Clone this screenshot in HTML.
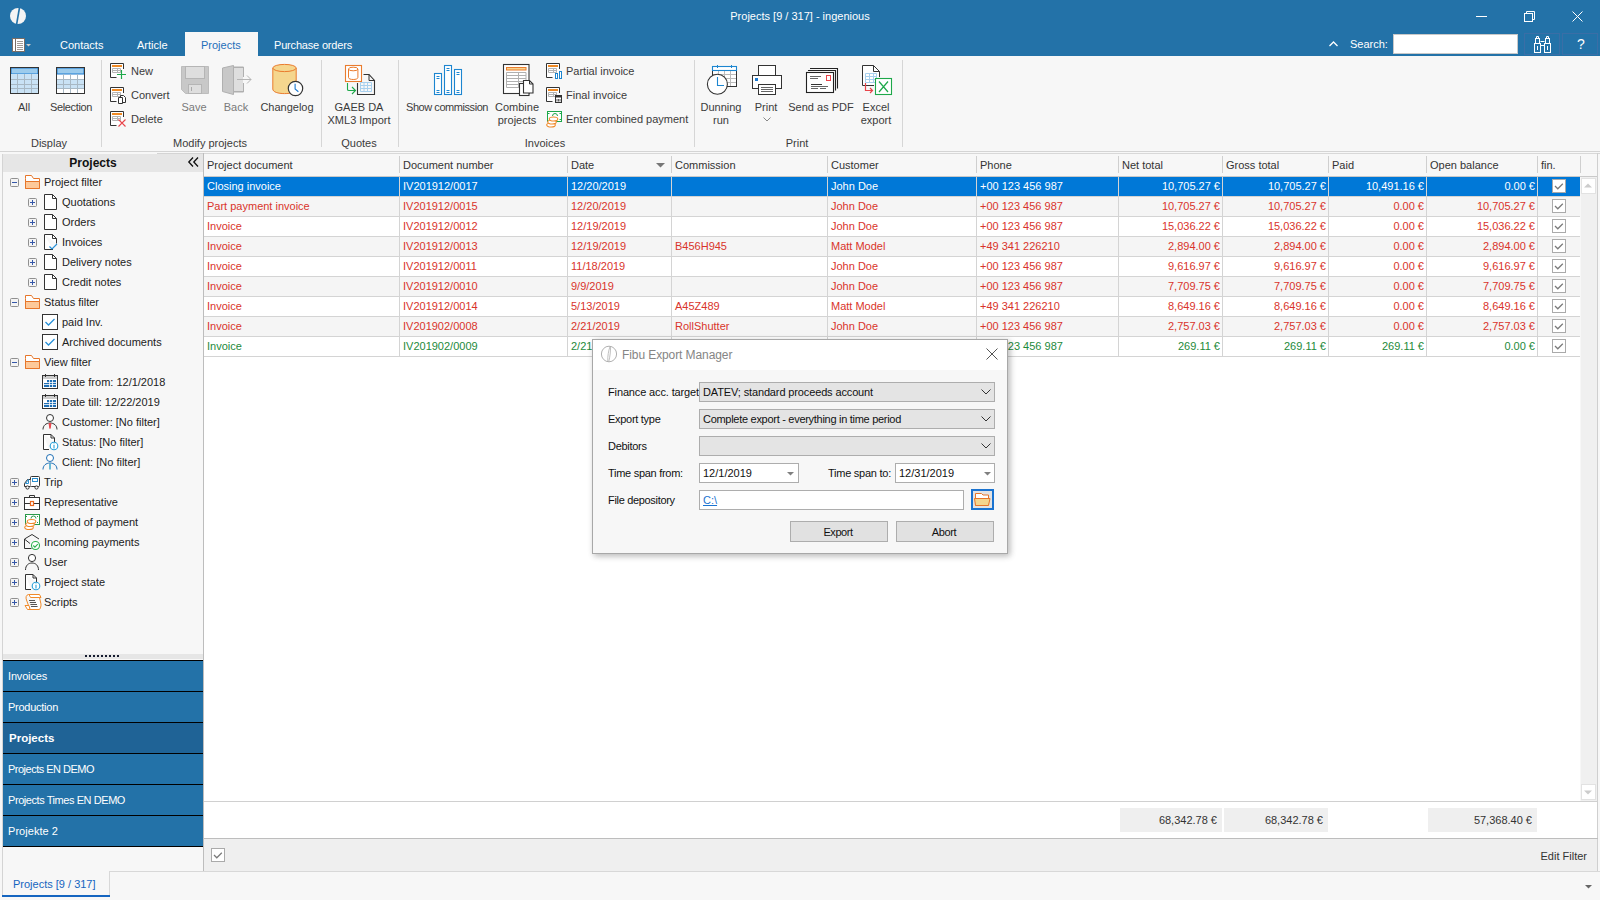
<!DOCTYPE html><html><head><meta charset="utf-8"><style>
*{margin:0;padding:0;box-sizing:border-box}
body{width:1600px;height:900px;overflow:hidden;position:relative;background:#f7f7f7;font-family:"Liberation Sans",sans-serif;font-size:11px;color:#333}
.ab{position:absolute}
.t{position:absolute;white-space:nowrap;line-height:14px}
svg{position:absolute;overflow:visible}
</style></head><body>
<div class="ab" style="left:0px;top:0px;width:1600px;height:56px;background:#2372a8"></div>
<svg style="left:10px;top:8px" width="16" height="16" viewBox="0 0 16 16"><circle cx="8" cy="8" r="8" fill="#f4f4f4"/><path d="M6.5 17 L9.6 -1" stroke="#2372a8" stroke-width="1.6"/></svg>
<div class="t" style="left:600.0px;top:9px;width:400px;text-align:center;color:#fff">Projects [9 / 317] - ingenious</div>
<svg style="left:1476px;top:16px" width="12" height="1" viewBox="0 0 12 1"><rect x="0" y="0" width="11" height="1" fill="#fff"/></svg>
<svg style="left:1524px;top:11px" width="11" height="11" viewBox="0 0 11 11"><rect x="0.5" y="2.5" width="8" height="8" fill="none" stroke="#fff"/><path d="M2.5 2.5V0.5h8v8h-2" fill="none" stroke="#fff"/></svg>
<svg style="left:1572px;top:11px" width="11" height="11" viewBox="0 0 11 11"><path d="M0.5 0.5L10.5 10.5M10.5 0.5L0.5 10.5" stroke="#fff" stroke-width="1"/></svg>
<svg style="left:12px;top:38px" width="20" height="15" viewBox="0 0 20 15"><rect x="0.5" y="0.5" width="12" height="13" fill="#fff" stroke="#7a6e66"/><path d="M3.5 0.5v13" stroke="#7a6e66"/><path d="M5 3.5h6M5 5.5h6M5 7.5h6M5 9.5h6M5 11.5h6" stroke="#7a6e66" stroke-width="0.7"/><path d="M14 6h5l-2.5 2.5z" fill="#ccc"/></svg>
<div class="t" style="left:60px;top:38px;color:#fff">Contacts</div>
<div class="t" style="left:137px;top:38px;color:#fff">Article</div>
<div class="ab" style="left:185px;top:32px;width:73px;height:24px;background:#f7f7f7"></div>
<div class="t" style="left:201px;top:38px;color:#1f6fba">Projects</div>
<div class="t" style="left:274px;top:38px;color:#fff;letter-spacing:-0.180px;">Purchase orders</div>
<svg style="left:1329px;top:41px" width="9" height="6" viewBox="0 0 9 6"><path d="M0.5 5L4.5 1L8.5 5" fill="none" stroke="#fff" stroke-width="1.3"/></svg>
<div class="t" style="left:1350px;top:37px;color:#fff">Search:</div>
<div class="ab" style="left:1393px;top:34px;width:125px;height:20px;background:#fff;border:1px solid #c8c8c8"></div>
<div class="ab" style="left:1524px;top:33px;width:36px;height:22px;border:1px solid #3a6ea6"></div>
<div class="ab" style="left:1562px;top:33px;width:36px;height:22px;border:1px solid #3a6ea6"></div>
<svg style="left:1534px;top:36px" width="17" height="17" viewBox="0 0 17 17"><g fill="none" stroke="#fff" stroke-width="1"><rect x="0.5" y="7.5" width="6" height="9"/><rect x="10.5" y="7.5" width="6" height="9"/><rect x="1.5" y="2.5" width="4" height="5"/><rect x="11.5" y="2.5" width="4" height="5"/><path d="M2.5 2.5V0.5h2v2M12.5 2.5V0.5h2v2M6.5 5.5h4M6.5 9.5h4"/><path d="M3.5 10v4M13.5 10v4"/></g></svg>
<div class="t" style="left:1577px;top:37px;color:#fff;font-size:14px">?</div>
<div class="ab" style="left:0px;top:151px;width:1600px;height:1px;background:#d4d4d4"></div>
<div class="ab" style="left:157px;top:153px;width:1443px;height:1px;background:#d4d4d4"></div>
<div class="ab" style="left:101px;top:60px;width:1px;height:87px;background:#d6d6d6"></div>
<div class="ab" style="left:321px;top:60px;width:1px;height:87px;background:#d6d6d6"></div>
<div class="ab" style="left:398px;top:60px;width:1px;height:87px;background:#d6d6d6"></div>
<div class="ab" style="left:694px;top:60px;width:1px;height:87px;background:#d6d6d6"></div>
<div class="ab" style="left:902px;top:60px;width:1px;height:87px;background:#d6d6d6"></div>
<div class="t" style="left:-51.0px;top:136px;width:200px;text-align:center;color:#3b3b3b">Display</div>
<div class="t" style="left:110.0px;top:136px;width:200px;text-align:center;color:#3b3b3b">Modify projects</div>
<div class="t" style="left:259.0px;top:136px;width:200px;text-align:center;color:#3b3b3b">Quotes</div>
<div class="t" style="left:445.0px;top:136px;width:200px;text-align:center;color:#3b3b3b">Invoices</div>
<div class="t" style="left:697.0px;top:136px;width:200px;text-align:center;color:#3b3b3b">Print</div>
<svg style="left:10px;top:67px" width="30" height="28" viewBox="0 0 30 28"><rect x="0.5" y="0.5" width="28" height="26" fill="#fff" stroke="#333"/><rect x="1" y="1" width="27" height="6" fill="#9ccbec" stroke="#1d7ad0" stroke-width="1"/><rect x="1" y="7" width="27" height="19" fill="#c9e2f5"/><path d="M1 12.5h27M1 17.5h27M1 21.5h27M7.5 7v19M14.5 7v19M21.5 7v19" stroke="#a8b8c4" stroke-width="1"/><rect x="0.5" y="0.5" width="28" height="26" fill="none" stroke="#333"/></svg>
<svg style="left:56px;top:67px" width="30" height="28" viewBox="0 0 30 28"><rect x="0.5" y="0.5" width="28" height="26" fill="#fff" stroke="#333"/><rect x="1" y="1" width="27" height="6" fill="#9ccbec" stroke="#1d7ad0" stroke-width="1"/><rect x="1" y="12" width="27" height="10" fill="#c9e2f5"/><path d="M1 12.5h27M1 17.5h27M1 21.5h27M7.5 7v19M14.5 7v19M21.5 7v19" stroke="#a8b8c4" stroke-width="1"/><rect x="0.5" y="0.5" width="28" height="26" fill="none" stroke="#333"/></svg>
<div class="t" style="left:-76.0px;top:100px;width:200px;text-align:center;color:#3b3b3b">All</div>
<div class="t" style="left:-29.0px;top:100px;width:200px;text-align:center;color:#3b3b3b;letter-spacing:-0.361px;">Selection</div>
<svg style="left:110px;top:63px" width="18" height="18" viewBox="0 0 18 18"><path d="M0.5 0.5h13v14h-13z" fill="#fff"/><path d="M13.5 6V0.5H0.5V14.5H6.5" fill="none" stroke="#333"/><rect x="2" y="2" width="10" height="2" fill="#f08a24"/><path d="M2.5 5.5h8v4h-8zM2.5 7.5h8M7.5 5.5v4" fill="none" stroke="#b4b4b4"/><path d="M7 11.5h9M11.5 7v9" stroke="#1ea84a" stroke-width="1.2"/></svg>
<svg style="left:110px;top:87px" width="18" height="18" viewBox="0 0 18 18"><path d="M0.5 0.5h13v14h-13z" fill="#fff"/><path d="M13.5 6V0.5H0.5V14.5H6.5" fill="none" stroke="#333"/><rect x="2" y="2" width="10" height="2" fill="#f08a24"/><path d="M2.5 5.5h8v4h-8zM2.5 7.5h8M7.5 5.5v4" fill="none" stroke="#b4b4b4"/><path d="M10.5 8.5h3l2 2v5h-5z" fill="#fff" stroke="#333"/><path d="M8.5 10.5h4v6h-4z" fill="#fff" stroke="#333"/></svg>
<svg style="left:110px;top:111px" width="18" height="18" viewBox="0 0 18 18"><path d="M0.5 0.5h13v14h-13z" fill="#fff"/><path d="M13.5 6V0.5H0.5V14.5H6.5" fill="none" stroke="#333"/><rect x="2" y="2" width="10" height="2" fill="#f08a24"/><path d="M2.5 5.5h8v4h-8zM2.5 7.5h8M7.5 5.5v4" fill="none" stroke="#b4b4b4"/><path d="M8.5 8.5l7 7M15.5 8.5l-7 7" stroke="#e8444a" stroke-width="1.1"/></svg>
<div class="t" style="left:131px;top:64px;color:#3b3b3b">New</div>
<div class="t" style="left:131px;top:88px;color:#3b3b3b">Convert</div>
<div class="t" style="left:131px;top:112px;color:#3b3b3b">Delete</div>
<svg style="left:181px;top:66px" width="29" height="28" viewBox="0 0 29 28"><path d="M0.5 0.5h27v27h-23l-4-4z" fill="#c8c8c8" stroke="#bdbdbd"/><rect x="4.5" y="0.5" width="19" height="12" fill="#dedede" stroke="#b5b5b5"/><rect x="7.5" y="18.5" width="13" height="9" fill="#dedede" stroke="#b5b5b5"/><path d="M10.5 21v4" stroke="#aaa"/></svg>
<div class="t" style="left:94.0px;top:100px;width:200px;text-align:center;color:#7a7a7a">Save</div>
<svg style="left:222px;top:65px" width="31" height="30" viewBox="0 0 31 30"><path d="M0.5 3l11-2.5v29l-11-3z" fill="#c8c8c8" stroke="#b0b0b0"/><path d="M11.5 2h10v10M21.5 18v9h-10" fill="#dedede" stroke="#b0b0b0"/><rect x="12" y="2.5" width="9" height="24" fill="#dedede"/><path d="M11.5 2.5h10v9M21.5 18v8.5h-10" fill="none" stroke="#b0b0b0"/><path d="M15 14.5h14M25 10.5l4 4-4 4" fill="none" stroke="#b5b5b5"/></svg>
<div class="t" style="left:136.0px;top:100px;width:200px;text-align:center;color:#7a7a7a">Back</div>
<svg style="left:272px;top:64px" width="32" height="32" viewBox="0 0 32 32"><path d="M0.8 4v21c0 3 5.2 4.6 11.7 4.6s11.7-1.6 11.7-4.6V4" fill="#f5d68e" stroke="#ea7c2e"/><ellipse cx="12.5" cy="4" rx="11.7" ry="3.6" fill="#f5d68e" stroke="#ea7c2e"/><circle cx="23.5" cy="24.5" r="7.2" fill="#fff" stroke="#333" stroke-width="1.2"/><path d="M23.1 19.8V25L26.4 27.7" fill="none" stroke="#1d7ad0" stroke-width="1.1"/></svg>
<div class="t" style="left:187.0px;top:100px;width:200px;text-align:center;color:#3b3b3b">Changelog</div>
<svg style="left:345px;top:64px" width="32" height="32" viewBox="0 0 32 32"><rect x="0.5" y="1.5" width="16" height="16" fill="#fff" stroke="#ea7c2e" stroke-width="1.1"/><path d="M3.5 5v8.5c0 1.3 2.2 2 4.7 2s4.7-.7 4.7-2V5" fill="none" stroke="#ea7c2e"/><ellipse cx="8.2" cy="5" rx="4.7" ry="1.8" fill="none" stroke="#ea7c2e"/><path d="M18.5 10.5H24L29.5 16.5V30.5H12.5V19" fill="none" stroke="#333" stroke-width="1.1"/><path d="M24 10.5V16.5H29.5" fill="none" stroke="#333"/><path d="M15.5 18.5h11v9h-11zM15.5 21.5h11M15.5 24.5h11M19 18.5v9M22.5 18.5v9" fill="none" stroke="#a8d0ee"/><path d="M2.5 19V25.5Q2.5 26.5 4 26.5H10M7 23L10.5 26.5 7 30" fill="none" stroke="#1ea84a" stroke-width="1.1"/></svg>
<div class="t" style="left:259.0px;top:100px;width:200px;text-align:center;color:#3b3b3b">GAEB DA</div>
<div class="t" style="left:259.0px;top:113px;width:200px;text-align:center;color:#3b3b3b">XML3 Import</div>
<svg style="left:434px;top:64px" width="30" height="32" viewBox="0 0 30 32"><g fill="#fff" stroke="#1d86d0" stroke-width="1.1"><rect x="0.5" y="9.5" width="7" height="21"/><rect x="10.5" y="1.5" width="7" height="29"/><rect x="20.5" y="5.5" width="7" height="25"/></g><path d="M2.5 12.5h3M2.5 14.5h3M2.5 26.5h3M2.5 28.5h3M12.5 4.5h3M12.5 6.5h3M12.5 26.5h3M12.5 28.5h3M22.5 8.5h3M22.5 10.5h3M22.5 26.5h3M22.5 28.5h3" stroke="#1d86d0"/></svg>
<div class="t" style="left:347.0px;top:100px;width:200px;text-align:center;color:#3b3b3b;letter-spacing:-0.442px;">Show commission</div>
<svg style="left:503px;top:63px" width="32" height="34" viewBox="0 0 32 34"><rect x="0.5" y="1.5" width="25.5" height="29" fill="#fff" stroke="#333" stroke-width="1.1"/><rect x="3.5" y="4.5" width="19.5" height="2.5" fill="#f7d591" stroke="#ea7c2e"/><path d="M3.5 9.5h19.5v15h-19.5zM3.5 12.5h19.5M3.5 15.5h19.5M3.5 18.5h19.5M3.5 21.5h19.5M15.5 9.5v15" fill="none" stroke="#b0b0b0"/><rect x="16.5" y="20.5" width="9.5" height="12" fill="#fff" stroke="#333" stroke-width="1.1"/><path d="M20.5 17.5h6l3.5 3.5v9h-9.5z" fill="#fff" stroke="#333" stroke-width="1.1"/><path d="M26.5 17.5v3.5h3.5" fill="none" stroke="#333"/></svg>
<div class="t" style="left:417.0px;top:100px;width:200px;text-align:center;color:#3b3b3b">Combine</div>
<div class="t" style="left:417.0px;top:113px;width:200px;text-align:center;color:#3b3b3b">projects</div>
<svg style="left:546px;top:63px" width="18" height="18" viewBox="0 0 18 18"><path d="M0.5 0.5h13v14h-13z" fill="#fff"/><path d="M13.5 6V0.5H0.5V14.5H6.5" fill="none" stroke="#333"/><rect x="2" y="2" width="10" height="2" fill="#f08a24"/><path d="M2.5 5.5h8v4h-8zM2.5 7.5h8M7.5 5.5v4" fill="none" stroke="#b4b4b4"/><rect x="9.5" y="10.5" width="2" height="5" fill="#fff" stroke="#1d86d0"/><rect x="13.5" y="8.5" width="2" height="7" fill="#fff" stroke="#1d86d0"/></svg>
<svg style="left:546px;top:87px" width="18" height="18" viewBox="0 0 18 18"><path d="M0.5 0.5h13v14h-13z" fill="#fff"/><path d="M13.5 6V0.5H0.5V14.5H6.5" fill="none" stroke="#333"/><rect x="2" y="2" width="10" height="2" fill="#f08a24"/><path d="M2.5 5.5h8v4h-8zM2.5 7.5h8M7.5 5.5v4" fill="none" stroke="#b4b4b4"/><rect x="9.5" y="8.5" width="6" height="7" fill="#fff" stroke="#333"/><path d="M9.5 9.5h6" stroke="#333" stroke-width="2"/><path d="M11 12v2.5M12.5 12v2.5M14 12v2.5" stroke="#333" stroke-width="0.8"/></svg>
<svg style="left:546px;top:111px" width="18" height="18" viewBox="0 0 18 18"><rect x="1.5" y="0.5" width="14" height="10" fill="#fff" stroke="#1ea84a"/><path d="M2 2.5h1.5M15 2.5h-1.5M15 8.5h-1.5" stroke="#1ea84a"/><path d="M6.5 5a2.5 2.5 0 0 1 5 0" fill="none" stroke="#1ea84a"/><g fill="#fff" stroke="#f08a2a" stroke-width="1.1"><ellipse cx="5" cy="14" rx="4.3" ry="2"/><ellipse cx="6" cy="11" rx="4.3" ry="2"/><ellipse cx="7.5" cy="8" rx="4.3" ry="2"/></g></svg>
<div class="t" style="left:566px;top:64px;color:#3b3b3b">Partial invoice</div>
<div class="t" style="left:566px;top:88px;color:#3b3b3b">Final invoice</div>
<div class="t" style="left:566px;top:112px;color:#3b3b3b">Enter combined payment</div>
<svg style="left:707px;top:64px" width="32" height="32" viewBox="0 0 32 32"><rect x="5.5" y="2.5" width="24" height="20" fill="#fff" stroke="#333"/><path d="M11.5 7v15.5M17.5 7v15.5M23.5 7v15.5M6 10.5h23M6 14.5h23M6 18.5h23" stroke="#bbb"/><rect x="5.5" y="2.5" width="24" height="20" fill="none" stroke="#333"/><rect x="5.5" y="2.5" width="24" height="4" fill="#fff" stroke="#1d86d0" stroke-width="1.1"/><path d="M10.5 1v3M24.5 1v3" stroke="#1d86d0"/><circle cx="10.4" cy="20.3" r="10" fill="#fff" stroke="#333" stroke-width="1.1"/><path d="M10.5 13V21.5H17" fill="none" stroke="#1d86d0" stroke-width="1.1"/></svg>
<div class="t" style="left:621.0px;top:100px;width:200px;text-align:center;color:#3b3b3b">Dunning</div>
<div class="t" style="left:621.0px;top:113px;width:200px;text-align:center;color:#3b3b3b">run</div>
<svg style="left:752px;top:64px" width="32" height="32" viewBox="0 0 32 32"><rect x="6.5" y="1.5" width="17" height="10" fill="#fff" stroke="#333"/><rect x="0.5" y="11.5" width="29" height="13" fill="#fff" stroke="#333"/><rect x="3" y="14" width="3" height="3" fill="#1d7ad0"/><rect x="6.5" y="20.5" width="17" height="10" fill="#fff" stroke="#333"/><path d="M9 23.5h12M9 25.5h12M9 27.5h12" stroke="#555" stroke-width="0.9"/></svg>
<div class="t" style="left:666.0px;top:100px;width:200px;text-align:center;color:#3b3b3b">Print</div>
<svg style="left:763px;top:117px" width="8" height="5" viewBox="0 0 8 5"><path d="M0.5 0.5l3.5 3.5 3.5-3.5" fill="none" stroke="#888"/></svg>
<svg style="left:806px;top:67px" width="34" height="28" viewBox="0 0 34 28"><path d="M4 1.5H31.5V21.5M2 3.5H29.5V23.5" fill="none" stroke="#222" stroke-width="1.1"/><rect x="0.5" y="5.5" width="27" height="20" fill="#fff" stroke="#222" stroke-width="1.1"/><rect x="20.5" y="8.5" width="4" height="5" fill="none" stroke="#e8444a"/><path d="M4 9.5h11M4 11.5h8M5 19.5h17M5 21.5h7M14 21.5h6" stroke="#666"/><path d="M5 17.5h11" stroke="#333"/></svg>
<div class="t" style="left:721.0px;top:100px;width:200px;text-align:center;color:#3b3b3b">Send as PDF</div>
<svg style="left:862px;top:64px" width="32" height="32" viewBox="0 0 32 32"><path d="M12 21.5H0.5V1.5H11.5L17.5 7.5V13" fill="#fff" stroke="#333"/><path d="M11.5 1.5V7.5H17.5" fill="none" stroke="#333"/><path d="M3.5 9.5h11v9h-11zM3.5 12.5h11M3.5 15.5h11M7.5 9.5v9M11.5 9.5v9" fill="none" stroke="#a8d0ee"/><rect x="13.5" y="14.5" width="16" height="16" fill="#fff" stroke="#1ea84a" stroke-width="1.1"/><path d="M17 17.5L26 28M26 17.5L17 28" stroke="#1ea84a" stroke-width="1.2"/><path d="M3.5 19V26.5H10.5M8 24L10.5 26.5 8 29" fill="none" stroke="#e8444a" stroke-width="1.2"/></svg>
<div class="t" style="left:776.0px;top:100px;width:200px;text-align:center;color:#3b3b3b">Excel</div>
<div class="t" style="left:776.0px;top:113px;width:200px;text-align:center;color:#3b3b3b">export</div>
<div class="ab" style="left:2px;top:154px;width:1px;height:743px;background:#d4d4d4"></div>
<div class="ab" style="left:3px;top:154px;width:200px;height:18px;background:#e6e6e6"></div>
<div class="t" style="left:-7.0px;top:156px;width:200px;text-align:center;color:#111;font-weight:bold;font-size:12px">Projects</div>
<svg style="left:188px;top:157px" width="11" height="10" viewBox="0 0 11 10"><path d="M5 0.5L0.8 5 5 9.5M10 0.5L5.8 5 10 9.5" fill="none" stroke="#111" stroke-width="1.3"/></svg>
<svg style="left:10px;top:178px" width="9" height="9" viewBox="0 0 9 9"><rect x="0.5" y="0.5" width="8" height="8" rx="1" fill="#f4f4f4" stroke="#909090"/><path d="M2 4.5h5" stroke="#3557a8" stroke-width="1"/></svg>
<svg style="left:24px;top:174px" width="18" height="18" viewBox="0 0 18 18"><path d="M1.5 4.5v10h14v-10h-6l-2-3h-6z" fill="#fff" stroke="#e6762a"/><path d="M1.5 7.5h14v7h-14z" fill="#fdc99a" stroke="#e6762a"/></svg>
<div class="t" style="left:44px;top:175px;color:#222">Project filter</div>
<svg style="left:28px;top:198px" width="9" height="9" viewBox="0 0 9 9"><rect x="0.5" y="0.5" width="8" height="8" rx="1" fill="#f4f4f4" stroke="#909090"/><path d="M2 4.5h5" stroke="#3557a8" stroke-width="1"/><path d="M4.5 2v5" stroke="#3557a8" stroke-width="1"/></svg>
<svg style="left:44px;top:194px" width="16" height="16" viewBox="0 0 16 16"><path d="M0.5 0.5h8l4 4v11h-12z" fill="#fff" stroke="#333"/><path d="M8.5 0.5v4h4" fill="none" stroke="#333"/></svg>
<div class="t" style="left:62px;top:195px;color:#222">Quotations</div>
<svg style="left:28px;top:218px" width="9" height="9" viewBox="0 0 9 9"><rect x="0.5" y="0.5" width="8" height="8" rx="1" fill="#f4f4f4" stroke="#909090"/><path d="M2 4.5h5" stroke="#3557a8" stroke-width="1"/><path d="M4.5 2v5" stroke="#3557a8" stroke-width="1"/></svg>
<svg style="left:44px;top:214px" width="16" height="16" viewBox="0 0 16 16"><path d="M0.5 0.5h8l4 4v11h-12z" fill="#fff" stroke="#333"/><path d="M8.5 0.5v4h4" fill="none" stroke="#333"/></svg>
<div class="t" style="left:62px;top:215px;color:#222">Orders</div>
<svg style="left:28px;top:238px" width="9" height="9" viewBox="0 0 9 9"><rect x="0.5" y="0.5" width="8" height="8" rx="1" fill="#f4f4f4" stroke="#909090"/><path d="M2 4.5h5" stroke="#3557a8" stroke-width="1"/><path d="M4.5 2v5" stroke="#3557a8" stroke-width="1"/></svg>
<svg style="left:44px;top:234px" width="16" height="16" viewBox="0 0 16 16"><path d="M0.5 0.5h8l4 4v5M9 15.5h-8.5v-15" fill="#fff" stroke="#333"/><path d="M8.5 0.5v4h4" fill="none" stroke="#333"/><path d="M5.5 12.5l2.5 2.5 5-5" fill="none" stroke="#2790d8" stroke-width="1.2"/></svg>
<div class="t" style="left:62px;top:235px;color:#222">Invoices</div>
<svg style="left:28px;top:258px" width="9" height="9" viewBox="0 0 9 9"><rect x="0.5" y="0.5" width="8" height="8" rx="1" fill="#f4f4f4" stroke="#909090"/><path d="M2 4.5h5" stroke="#3557a8" stroke-width="1"/><path d="M4.5 2v5" stroke="#3557a8" stroke-width="1"/></svg>
<svg style="left:44px;top:254px" width="16" height="16" viewBox="0 0 16 16"><path d="M0.5 0.5h8l4 4v11h-12z" fill="#fff" stroke="#333"/><path d="M8.5 0.5v4h4" fill="none" stroke="#333"/></svg>
<div class="t" style="left:62px;top:255px;color:#222">Delivery notes</div>
<svg style="left:28px;top:278px" width="9" height="9" viewBox="0 0 9 9"><rect x="0.5" y="0.5" width="8" height="8" rx="1" fill="#f4f4f4" stroke="#909090"/><path d="M2 4.5h5" stroke="#3557a8" stroke-width="1"/><path d="M4.5 2v5" stroke="#3557a8" stroke-width="1"/></svg>
<svg style="left:44px;top:274px" width="16" height="16" viewBox="0 0 16 16"><path d="M0.5 0.5h8l4 4v11h-12z" fill="#fff" stroke="#333"/><path d="M8.5 0.5v4h4" fill="none" stroke="#333"/></svg>
<div class="t" style="left:62px;top:275px;color:#222">Credit notes</div>
<svg style="left:10px;top:298px" width="9" height="9" viewBox="0 0 9 9"><rect x="0.5" y="0.5" width="8" height="8" rx="1" fill="#f4f4f4" stroke="#909090"/><path d="M2 4.5h5" stroke="#3557a8" stroke-width="1"/></svg>
<svg style="left:24px;top:294px" width="18" height="18" viewBox="0 0 18 18"><path d="M1.5 4.5v10h14v-10h-6l-2-3h-6z" fill="#fff" stroke="#e6762a"/><path d="M1.5 7.5h14v7h-14z" fill="#fdc99a" stroke="#e6762a"/></svg>
<div class="t" style="left:44px;top:295px;color:#222">Status filter</div>
<svg style="left:42px;top:314px" width="16" height="16" viewBox="0 0 16 16"><rect x="0.5" y="0.5" width="15" height="15" fill="#fff" stroke="#333"/><path d="M3.5 8l3 3 6-6" fill="none" stroke="#2790d8" stroke-width="1.3"/></svg>
<div class="t" style="left:62px;top:315px;color:#222">paid Inv.</div>
<svg style="left:42px;top:334px" width="16" height="16" viewBox="0 0 16 16"><rect x="0.5" y="0.5" width="15" height="15" fill="#fff" stroke="#333"/><path d="M3.5 8l3 3 6-6" fill="none" stroke="#2790d8" stroke-width="1.3"/></svg>
<div class="t" style="left:62px;top:335px;color:#222">Archived documents</div>
<svg style="left:10px;top:358px" width="9" height="9" viewBox="0 0 9 9"><rect x="0.5" y="0.5" width="8" height="8" rx="1" fill="#f4f4f4" stroke="#909090"/><path d="M2 4.5h5" stroke="#3557a8" stroke-width="1"/></svg>
<svg style="left:24px;top:354px" width="18" height="18" viewBox="0 0 18 18"><path d="M1.5 4.5v10h14v-10h-6l-2-3h-6z" fill="#fff" stroke="#e6762a"/><path d="M1.5 7.5h14v7h-14z" fill="#fdc99a" stroke="#e6762a"/></svg>
<div class="t" style="left:44px;top:355px;color:#222">View filter</div>
<svg style="left:42px;top:374px" width="16" height="16" viewBox="0 0 16 16"><rect x="0.5" y="1.5" width="15" height="13" fill="#fff" stroke="#333"/><rect x="1" y="2" width="14" height="3" fill="#ccc"/><path d="M3.5 0v3M12.5 0v3" stroke="#333"/><g fill="#1f6fb5"><rect x="5" y="6" width="9" height="7"/><rect x="2" y="9" width="3" height="4"/></g><path d="M5 8.5h9M2 10.5h12M7.5 6v7M10.5 6v7" stroke="#fff" stroke-width="0.8"/></svg>
<div class="t" style="left:62px;top:375px;color:#222">Date from: 12/1/2018</div>
<svg style="left:42px;top:394px" width="16" height="16" viewBox="0 0 16 16"><rect x="0.5" y="1.5" width="15" height="13" fill="#fff" stroke="#333"/><rect x="1" y="2" width="14" height="3" fill="#ccc"/><path d="M3.5 0v3M12.5 0v3" stroke="#333"/><g fill="#1f6fb5"><rect x="5" y="6" width="9" height="7"/><rect x="2" y="9" width="3" height="4"/></g><path d="M5 8.5h9M2 10.5h12M7.5 6v7M10.5 6v7" stroke="#fff" stroke-width="0.8"/></svg>
<div class="t" style="left:62px;top:395px;color:#222">Date till: 12/22/2019</div>
<svg style="left:42px;top:414px" width="16" height="16" viewBox="0 0 16 16"><circle cx="8" cy="4" r="3.5" fill="#fff" stroke="#333"/><path d="M1 15.5c0-4 3-6.5 7-6.5s7 2.5 7 6.5" fill="none" stroke="#333"/><path d="M7 9.5l1 5 1-5z" fill="#e8444a" stroke="#e8444a"/></svg>
<div class="t" style="left:62px;top:415px;color:#222">Customer: [No filter]</div>
<svg style="left:42px;top:434px" width="16" height="16" viewBox="0 0 16 16"><path d="M1.5 0.5h7.5l3.5 3.5v4M7 15.5h-5.5v-15" fill="#fff" stroke="#333"/><path d="M9 0.5v3.5h3.5" fill="none" stroke="#333"/><circle cx="12" cy="12" r="3.8" fill="#fff" stroke="#2aa0d8" stroke-width="1.1"/><path d="M12 11v3.5M12 9.5v0.8" stroke="#2aa0d8" stroke-width="1.1"/></svg>
<div class="t" style="left:62px;top:435px;color:#222">Status: [No filter]</div>
<svg style="left:42px;top:454px" width="16" height="16" viewBox="0 0 16 16"><circle cx="8" cy="4" r="3.5" fill="#fff" stroke="#1f6fb5"/><path d="M1 15.5c0-4 3-6.5 7-6.5s7 2.5 7 6.5" fill="none" stroke="#1f6fb5"/><path d="M8 9.5v6" stroke="#2aa0c8" stroke-width="1.4"/></svg>
<div class="t" style="left:62px;top:455px;color:#222">Client: [No filter]</div>
<svg style="left:10px;top:478px" width="9" height="9" viewBox="0 0 9 9"><rect x="0.5" y="0.5" width="8" height="8" rx="1" fill="#f4f4f4" stroke="#909090"/><path d="M2 4.5h5" stroke="#3557a8" stroke-width="1"/><path d="M4.5 2v5" stroke="#3557a8" stroke-width="1"/></svg>
<svg style="left:24px;top:474px" width="18" height="18" viewBox="0 0 18 18"><rect x="6.5" y="2.5" width="9" height="10" rx="1" fill="#fff" stroke="#333"/><rect x="8.5" y="4.5" width="5" height="3" fill="none" stroke="#2a90d0"/><path d="M6.5 5.5H3.5L0.5 9.5V12.5H6.5" fill="#fff" stroke="#333"/><path d="M4.5 5.5L1.5 9.5H4.5z" fill="#fff" stroke="#2a90d0"/><circle cx="3.5" cy="13.5" r="1.6" fill="#fff" stroke="#333"/><circle cx="12.5" cy="13.5" r="1.6" fill="#fff" stroke="#333"/></svg>
<div class="t" style="left:44px;top:475px;color:#222">Trip</div>
<svg style="left:10px;top:498px" width="9" height="9" viewBox="0 0 9 9"><rect x="0.5" y="0.5" width="8" height="8" rx="1" fill="#f4f4f4" stroke="#909090"/><path d="M2 4.5h5" stroke="#3557a8" stroke-width="1"/><path d="M4.5 2v5" stroke="#3557a8" stroke-width="1"/></svg>
<svg style="left:24px;top:494px" width="18" height="18" viewBox="0 0 18 18"><rect x="0.5" y="3.5" width="15" height="12" fill="#fff" stroke="#333"/><path d="M5.5 3.5v-2h5v2M0.5 9.5h15" fill="none" stroke="#333"/><rect x="6.5" y="7.5" width="3" height="4" fill="#fff" stroke="#ea6a20" stroke-width="1.2"/></svg>
<div class="t" style="left:44px;top:495px;color:#222">Representative</div>
<svg style="left:10px;top:518px" width="9" height="9" viewBox="0 0 9 9"><rect x="0.5" y="0.5" width="8" height="8" rx="1" fill="#f4f4f4" stroke="#909090"/><path d="M2 4.5h5" stroke="#3557a8" stroke-width="1"/><path d="M4.5 2v5" stroke="#3557a8" stroke-width="1"/></svg>
<svg style="left:24px;top:514px" width="18" height="18" viewBox="0 0 18 18"><rect x="1.5" y="0.5" width="14" height="10" fill="#fff" stroke="#2a9a4a"/><path d="M2 2.5h1M14 2.5h-1M14 8.5h-1" stroke="#2a9a4a"/><path d="M7 4.5a2.5 2.5 0 0 1 5 0" fill="none" stroke="#2a9a4a"/><g fill="#fff" stroke="#f08a2a" stroke-width="1.1"><ellipse cx="5" cy="13.5" rx="4.3" ry="2"/><ellipse cx="6" cy="10.5" rx="4.3" ry="2"/><ellipse cx="7.5" cy="7.5" rx="4.3" ry="2"/></g></svg>
<div class="t" style="left:44px;top:515px;color:#222">Method of payment</div>
<svg style="left:10px;top:538px" width="9" height="9" viewBox="0 0 9 9"><rect x="0.5" y="0.5" width="8" height="8" rx="1" fill="#f4f4f4" stroke="#909090"/><path d="M2 4.5h5" stroke="#3557a8" stroke-width="1"/><path d="M4.5 2v5" stroke="#3557a8" stroke-width="1"/></svg>
<svg style="left:24px;top:534px" width="18" height="18" viewBox="0 0 18 18"><path d="M0.5 14.5V5L8 0.5 15 5" fill="none" stroke="#333"/><path d="M0.5 14.5h7M1 5.5l5 4" fill="none" stroke="#333"/><circle cx="11.5" cy="11.5" r="4" fill="#fff" stroke="#2bb24c" stroke-width="1.1"/><path d="M9.3 11.5l1.6 1.6 2.9-2.9" fill="none" stroke="#2bb24c" stroke-width="1.1"/></svg>
<div class="t" style="left:44px;top:535px;color:#222">Incoming payments</div>
<svg style="left:10px;top:558px" width="9" height="9" viewBox="0 0 9 9"><rect x="0.5" y="0.5" width="8" height="8" rx="1" fill="#f4f4f4" stroke="#909090"/><path d="M2 4.5h5" stroke="#3557a8" stroke-width="1"/><path d="M4.5 2v5" stroke="#3557a8" stroke-width="1"/></svg>
<svg style="left:24px;top:554px" width="18" height="18" viewBox="0 0 18 18"><circle cx="8" cy="4" r="3.6" fill="#fff" stroke="#333"/><path d="M1.5 16c0-4.5 2.8-7 6.5-7s6.5 2.5 6.5 7" fill="none" stroke="#333"/></svg>
<div class="t" style="left:44px;top:555px;color:#222">User</div>
<svg style="left:10px;top:578px" width="9" height="9" viewBox="0 0 9 9"><rect x="0.5" y="0.5" width="8" height="8" rx="1" fill="#f4f4f4" stroke="#909090"/><path d="M2 4.5h5" stroke="#3557a8" stroke-width="1"/><path d="M4.5 2v5" stroke="#3557a8" stroke-width="1"/></svg>
<svg style="left:24px;top:574px" width="18" height="18" viewBox="0 0 18 18"><path d="M1.5 0.5h7.5l3.5 3.5v4M7 15.5h-5.5v-15" fill="#fff" stroke="#333"/><path d="M9 0.5v3.5h3.5" fill="none" stroke="#333"/><circle cx="12" cy="12" r="3.8" fill="#fff" stroke="#2aa0d8" stroke-width="1.1"/><path d="M12 11v3.5M12 9.5v0.8" stroke="#2aa0d8" stroke-width="1.1"/></svg>
<div class="t" style="left:44px;top:575px;color:#222">Project state</div>
<svg style="left:10px;top:598px" width="9" height="9" viewBox="0 0 9 9"><rect x="0.5" y="0.5" width="8" height="8" rx="1" fill="#f4f4f4" stroke="#909090"/><path d="M2 4.5h5" stroke="#3557a8" stroke-width="1"/><path d="M4.5 2v5" stroke="#3557a8" stroke-width="1"/></svg>
<svg style="left:24px;top:594px" width="18" height="18" viewBox="0 0 18 18"><path d="M4.5 0.5H15.5L17 3.5H6.5L5 0.5" fill="#fff" stroke="#f08a2a"/><path d="M4.5 0.5C2 1 1.5 3.5 2.5 6L4.5 11.5" fill="none" stroke="#f08a2a"/><path d="M15.5 3.5L16.5 8C17.5 10.5 17 13.5 15.5 15.5H3.5L1 11.5H5L6 15.5" fill="#fff" stroke="#f08a2a"/><path d="M5 6.5h6M5.8 8.5h6.2M6.4 10.5h6.6M7 12.5h6.6" stroke="#555"/></svg>
<div class="t" style="left:44px;top:595px;color:#222">Scripts</div>
<div class="ab" style="left:3px;top:654px;width:200px;height:5px;background:#e6e6e6"></div>
<svg style="left:85px;top:655px" width="35" height="3" viewBox="0 0 35 3"><rect x="0" y="0" width="2" height="2" fill="#161c30"/><rect x="4" y="0" width="2" height="2" fill="#161c30"/><rect x="8" y="0" width="2" height="2" fill="#161c30"/><rect x="12" y="0" width="2" height="2" fill="#161c30"/><rect x="16" y="0" width="2" height="2" fill="#161c30"/><rect x="20" y="0" width="2" height="2" fill="#161c30"/><rect x="24" y="0" width="2" height="2" fill="#161c30"/><rect x="28" y="0" width="2" height="2" fill="#161c30"/><rect x="32" y="0" width="2" height="2" fill="#161c30"/></svg>
<div class="ab" style="left:3px;top:660px;width:200px;height:1px;background:#000"></div>
<div class="ab" style="left:3px;top:661px;width:200px;height:30px;background:#2372a8"></div>
<div class="t" style="left:8px;top:669px;color:#fff;letter-spacing:-0.169px;">Invoices</div>
<div class="ab" style="left:3px;top:691px;width:200px;height:1px;background:#000"></div>
<div class="ab" style="left:3px;top:692px;width:200px;height:30px;background:#2372a8"></div>
<div class="t" style="left:8px;top:700px;color:#fff;letter-spacing:-0.259px;">Production</div>
<div class="ab" style="left:3px;top:722px;width:200px;height:1px;background:#000"></div>
<div class="ab" style="left:3px;top:723px;width:200px;height:30px;background:#1f6396"></div>
<div class="t" style="left:9px;top:731px;color:#fff;font-weight:bold;font-size:11.5px">Projects</div>
<div class="ab" style="left:3px;top:753px;width:200px;height:1px;background:#000"></div>
<div class="ab" style="left:3px;top:754px;width:200px;height:30px;background:#2372a8"></div>
<div class="t" style="left:8px;top:762px;color:#fff;letter-spacing:-0.508px;">Projects EN DEMO</div>
<div class="ab" style="left:3px;top:784px;width:200px;height:1px;background:#000"></div>
<div class="ab" style="left:3px;top:785px;width:200px;height:30px;background:#2372a8"></div>
<div class="t" style="left:8px;top:793px;color:#fff;letter-spacing:-0.433px;">Projects Times EN DEMO</div>
<div class="ab" style="left:3px;top:815px;width:200px;height:1px;background:#000"></div>
<div class="ab" style="left:3px;top:816px;width:200px;height:30px;background:#2372a8"></div>
<div class="t" style="left:8px;top:824px;color:#fff;letter-spacing:0.048px;">Projekte 2</div>
<div class="ab" style="left:3px;top:846px;width:200px;height:1px;background:#000"></div>
<div class="ab" style="left:203px;top:153px;width:1395px;height:1px;background:#d8d8d8"></div>
<div class="ab" style="left:203px;top:153px;width:1px;height:718px;background:#bdbdbd"></div>
<div class="ab" style="left:1597px;top:153px;width:1px;height:719px;background:#cfcfcf"></div>
<div class="ab" style="left:204px;top:154px;width:1393px;height:22px;background:#f7f7f7"></div>
<div class="ab" style="left:204px;top:176px;width:1393px;height:1px;background:#c9c9c9"></div>
<div class="ab" style="left:204px;top:177px;width:1376px;height:625px;background:#fff"></div>
<div class="t" style="left:207px;top:158px;color:#333">Project document</div>
<div class="ab" style="left:399px;top:156px;width:1px;height:17px;background:#cfcfcf"></div>
<div class="t" style="left:403px;top:158px;color:#333">Document number</div>
<div class="ab" style="left:567px;top:156px;width:1px;height:17px;background:#cfcfcf"></div>
<div class="t" style="left:571px;top:158px;color:#333">Date</div>
<div class="ab" style="left:671px;top:156px;width:1px;height:17px;background:#cfcfcf"></div>
<div class="t" style="left:675px;top:158px;color:#333">Commission</div>
<div class="ab" style="left:827px;top:156px;width:1px;height:17px;background:#cfcfcf"></div>
<div class="t" style="left:831px;top:158px;color:#333">Customer</div>
<div class="ab" style="left:976px;top:156px;width:1px;height:17px;background:#cfcfcf"></div>
<div class="t" style="left:980px;top:158px;color:#333">Phone</div>
<div class="ab" style="left:1118px;top:156px;width:1px;height:17px;background:#cfcfcf"></div>
<div class="t" style="left:1122px;top:158px;color:#333">Net total</div>
<div class="ab" style="left:1222px;top:156px;width:1px;height:17px;background:#cfcfcf"></div>
<div class="t" style="left:1226px;top:158px;color:#333">Gross total</div>
<div class="ab" style="left:1328px;top:156px;width:1px;height:17px;background:#cfcfcf"></div>
<div class="t" style="left:1332px;top:158px;color:#333">Paid</div>
<div class="ab" style="left:1426px;top:156px;width:1px;height:17px;background:#cfcfcf"></div>
<div class="t" style="left:1430px;top:158px;color:#333">Open balance</div>
<div class="ab" style="left:1537px;top:156px;width:1px;height:17px;background:#cfcfcf"></div>
<div class="t" style="left:1541px;top:158px;color:#333">fin.</div>
<div class="ab" style="left:1580px;top:156px;width:1px;height:17px;background:#cfcfcf"></div>
<svg style="left:656px;top:163px" width="10" height="5" viewBox="0 0 10 5"><path d="M0 0h9l-4.5 4.5z" fill="#777"/></svg>
<div class="ab" style="left:204px;top:177px;width:1376px;height:19px;background:#0078d7"></div>
<div class="ab" style="left:204px;top:196px;width:1376px;height:1px;background:#d4d4d4"></div>
<div class="t" style="left:207px;top:179px;color:#fff">Closing invoice</div>
<div class="t" style="left:403px;top:179px;color:#fff">IV201912/0017</div>
<div class="t" style="left:571px;top:179px;color:#fff">12/20/2019</div>
<div class="t" style="left:675px;top:179px;color:#fff"></div>
<div class="t" style="left:831px;top:179px;color:#fff">John Doe</div>
<div class="t" style="left:980px;top:179px;color:#fff">+00 123 456 987</div>
<div class="t" style="left:1020px;top:179px;width:200px;text-align:right;color:#fff">10,705.27 €</div>
<div class="t" style="left:1126px;top:179px;width:200px;text-align:right;color:#fff">10,705.27 €</div>
<div class="t" style="left:1224px;top:179px;width:200px;text-align:right;color:#fff">10,491.16 €</div>
<div class="t" style="left:1335px;top:179px;width:200px;text-align:right;color:#fff">0.00 €</div>
<svg style="left:1552px;top:179px" width="14" height="14" viewBox="0 0 14 14"><rect x="0.5" y="0.5" width="13" height="13" fill="#fff" stroke="#aaa"/><path d="M3 7l2.8 2.8 5-5" fill="none" stroke="#7a7a7a" stroke-width="1.25"/></svg>
<div class="ab" style="left:204px;top:197px;width:1376px;height:19px;background:#f5f5f5"></div>
<div class="ab" style="left:204px;top:216px;width:1376px;height:1px;background:#d4d4d4"></div>
<div class="t" style="left:207px;top:199px;color:#d9342b">Part payment invoice</div>
<div class="t" style="left:403px;top:199px;color:#d9342b">IV201912/0015</div>
<div class="t" style="left:571px;top:199px;color:#d9342b">12/20/2019</div>
<div class="t" style="left:675px;top:199px;color:#d9342b"></div>
<div class="t" style="left:831px;top:199px;color:#d9342b">John Doe</div>
<div class="t" style="left:980px;top:199px;color:#d9342b">+00 123 456 987</div>
<div class="t" style="left:1020px;top:199px;width:200px;text-align:right;color:#d9342b">10,705.27 €</div>
<div class="t" style="left:1126px;top:199px;width:200px;text-align:right;color:#d9342b">10,705.27 €</div>
<div class="t" style="left:1224px;top:199px;width:200px;text-align:right;color:#d9342b">0.00 €</div>
<div class="t" style="left:1335px;top:199px;width:200px;text-align:right;color:#d9342b">10,705.27 €</div>
<svg style="left:1552px;top:199px" width="14" height="14" viewBox="0 0 14 14"><rect x="0.5" y="0.5" width="13" height="13" fill="#fff" stroke="#aaa"/><path d="M3 7l2.8 2.8 5-5" fill="none" stroke="#7a7a7a" stroke-width="1.25"/></svg>
<div class="ab" style="left:204px;top:217px;width:1376px;height:19px;background:#fff"></div>
<div class="ab" style="left:204px;top:236px;width:1376px;height:1px;background:#d4d4d4"></div>
<div class="t" style="left:207px;top:219px;color:#d9342b">Invoice</div>
<div class="t" style="left:403px;top:219px;color:#d9342b">IV201912/0012</div>
<div class="t" style="left:571px;top:219px;color:#d9342b">12/19/2019</div>
<div class="t" style="left:675px;top:219px;color:#d9342b"></div>
<div class="t" style="left:831px;top:219px;color:#d9342b">John Doe</div>
<div class="t" style="left:980px;top:219px;color:#d9342b">+00 123 456 987</div>
<div class="t" style="left:1020px;top:219px;width:200px;text-align:right;color:#d9342b">15,036.22 €</div>
<div class="t" style="left:1126px;top:219px;width:200px;text-align:right;color:#d9342b">15,036.22 €</div>
<div class="t" style="left:1224px;top:219px;width:200px;text-align:right;color:#d9342b">0.00 €</div>
<div class="t" style="left:1335px;top:219px;width:200px;text-align:right;color:#d9342b">15,036.22 €</div>
<svg style="left:1552px;top:219px" width="14" height="14" viewBox="0 0 14 14"><rect x="0.5" y="0.5" width="13" height="13" fill="#fff" stroke="#aaa"/><path d="M3 7l2.8 2.8 5-5" fill="none" stroke="#7a7a7a" stroke-width="1.25"/></svg>
<div class="ab" style="left:204px;top:237px;width:1376px;height:19px;background:#f5f5f5"></div>
<div class="ab" style="left:204px;top:256px;width:1376px;height:1px;background:#d4d4d4"></div>
<div class="t" style="left:207px;top:239px;color:#d9342b">Invoice</div>
<div class="t" style="left:403px;top:239px;color:#d9342b">IV201912/0013</div>
<div class="t" style="left:571px;top:239px;color:#d9342b">12/19/2019</div>
<div class="t" style="left:675px;top:239px;color:#d9342b">B456H945</div>
<div class="t" style="left:831px;top:239px;color:#d9342b">Matt Model</div>
<div class="t" style="left:980px;top:239px;color:#d9342b">+49 341 226210</div>
<div class="t" style="left:1020px;top:239px;width:200px;text-align:right;color:#d9342b">2,894.00 €</div>
<div class="t" style="left:1126px;top:239px;width:200px;text-align:right;color:#d9342b">2,894.00 €</div>
<div class="t" style="left:1224px;top:239px;width:200px;text-align:right;color:#d9342b">0.00 €</div>
<div class="t" style="left:1335px;top:239px;width:200px;text-align:right;color:#d9342b">2,894.00 €</div>
<svg style="left:1552px;top:239px" width="14" height="14" viewBox="0 0 14 14"><rect x="0.5" y="0.5" width="13" height="13" fill="#fff" stroke="#aaa"/><path d="M3 7l2.8 2.8 5-5" fill="none" stroke="#7a7a7a" stroke-width="1.25"/></svg>
<div class="ab" style="left:204px;top:257px;width:1376px;height:19px;background:#fff"></div>
<div class="ab" style="left:204px;top:276px;width:1376px;height:1px;background:#d4d4d4"></div>
<div class="t" style="left:207px;top:259px;color:#d9342b">Invoice</div>
<div class="t" style="left:403px;top:259px;color:#d9342b">IV201912/0011</div>
<div class="t" style="left:571px;top:259px;color:#d9342b">11/18/2019</div>
<div class="t" style="left:675px;top:259px;color:#d9342b"></div>
<div class="t" style="left:831px;top:259px;color:#d9342b">John Doe</div>
<div class="t" style="left:980px;top:259px;color:#d9342b">+00 123 456 987</div>
<div class="t" style="left:1020px;top:259px;width:200px;text-align:right;color:#d9342b">9,616.97 €</div>
<div class="t" style="left:1126px;top:259px;width:200px;text-align:right;color:#d9342b">9,616.97 €</div>
<div class="t" style="left:1224px;top:259px;width:200px;text-align:right;color:#d9342b">0.00 €</div>
<div class="t" style="left:1335px;top:259px;width:200px;text-align:right;color:#d9342b">9,616.97 €</div>
<svg style="left:1552px;top:259px" width="14" height="14" viewBox="0 0 14 14"><rect x="0.5" y="0.5" width="13" height="13" fill="#fff" stroke="#aaa"/><path d="M3 7l2.8 2.8 5-5" fill="none" stroke="#7a7a7a" stroke-width="1.25"/></svg>
<div class="ab" style="left:204px;top:277px;width:1376px;height:19px;background:#f5f5f5"></div>
<div class="ab" style="left:204px;top:296px;width:1376px;height:1px;background:#d4d4d4"></div>
<div class="t" style="left:207px;top:279px;color:#d9342b">Invoice</div>
<div class="t" style="left:403px;top:279px;color:#d9342b">IV201912/0010</div>
<div class="t" style="left:571px;top:279px;color:#d9342b">9/9/2019</div>
<div class="t" style="left:675px;top:279px;color:#d9342b"></div>
<div class="t" style="left:831px;top:279px;color:#d9342b">John Doe</div>
<div class="t" style="left:980px;top:279px;color:#d9342b">+00 123 456 987</div>
<div class="t" style="left:1020px;top:279px;width:200px;text-align:right;color:#d9342b">7,709.75 €</div>
<div class="t" style="left:1126px;top:279px;width:200px;text-align:right;color:#d9342b">7,709.75 €</div>
<div class="t" style="left:1224px;top:279px;width:200px;text-align:right;color:#d9342b">0.00 €</div>
<div class="t" style="left:1335px;top:279px;width:200px;text-align:right;color:#d9342b">7,709.75 €</div>
<svg style="left:1552px;top:279px" width="14" height="14" viewBox="0 0 14 14"><rect x="0.5" y="0.5" width="13" height="13" fill="#fff" stroke="#aaa"/><path d="M3 7l2.8 2.8 5-5" fill="none" stroke="#7a7a7a" stroke-width="1.25"/></svg>
<div class="ab" style="left:204px;top:297px;width:1376px;height:19px;background:#fff"></div>
<div class="ab" style="left:204px;top:316px;width:1376px;height:1px;background:#d4d4d4"></div>
<div class="t" style="left:207px;top:299px;color:#d9342b">Invoice</div>
<div class="t" style="left:403px;top:299px;color:#d9342b">IV201912/0014</div>
<div class="t" style="left:571px;top:299px;color:#d9342b">5/13/2019</div>
<div class="t" style="left:675px;top:299px;color:#d9342b">A45Z489</div>
<div class="t" style="left:831px;top:299px;color:#d9342b">Matt Model</div>
<div class="t" style="left:980px;top:299px;color:#d9342b">+49 341 226210</div>
<div class="t" style="left:1020px;top:299px;width:200px;text-align:right;color:#d9342b">8,649.16 €</div>
<div class="t" style="left:1126px;top:299px;width:200px;text-align:right;color:#d9342b">8,649.16 €</div>
<div class="t" style="left:1224px;top:299px;width:200px;text-align:right;color:#d9342b">0.00 €</div>
<div class="t" style="left:1335px;top:299px;width:200px;text-align:right;color:#d9342b">8,649.16 €</div>
<svg style="left:1552px;top:299px" width="14" height="14" viewBox="0 0 14 14"><rect x="0.5" y="0.5" width="13" height="13" fill="#fff" stroke="#aaa"/><path d="M3 7l2.8 2.8 5-5" fill="none" stroke="#7a7a7a" stroke-width="1.25"/></svg>
<div class="ab" style="left:204px;top:317px;width:1376px;height:19px;background:#f5f5f5"></div>
<div class="ab" style="left:204px;top:336px;width:1376px;height:1px;background:#d4d4d4"></div>
<div class="t" style="left:207px;top:319px;color:#d9342b">Invoice</div>
<div class="t" style="left:403px;top:319px;color:#d9342b">IV201902/0008</div>
<div class="t" style="left:571px;top:319px;color:#d9342b">2/21/2019</div>
<div class="t" style="left:675px;top:319px;color:#d9342b">RollShutter</div>
<div class="t" style="left:831px;top:319px;color:#d9342b">John Doe</div>
<div class="t" style="left:980px;top:319px;color:#d9342b">+00 123 456 987</div>
<div class="t" style="left:1020px;top:319px;width:200px;text-align:right;color:#d9342b">2,757.03 €</div>
<div class="t" style="left:1126px;top:319px;width:200px;text-align:right;color:#d9342b">2,757.03 €</div>
<div class="t" style="left:1224px;top:319px;width:200px;text-align:right;color:#d9342b">0.00 €</div>
<div class="t" style="left:1335px;top:319px;width:200px;text-align:right;color:#d9342b">2,757.03 €</div>
<svg style="left:1552px;top:319px" width="14" height="14" viewBox="0 0 14 14"><rect x="0.5" y="0.5" width="13" height="13" fill="#fff" stroke="#aaa"/><path d="M3 7l2.8 2.8 5-5" fill="none" stroke="#7a7a7a" stroke-width="1.25"/></svg>
<div class="ab" style="left:204px;top:337px;width:1376px;height:19px;background:#fff"></div>
<div class="ab" style="left:204px;top:356px;width:1376px;height:1px;background:#d4d4d4"></div>
<div class="t" style="left:207px;top:339px;color:#1d8a3a">Invoice</div>
<div class="t" style="left:403px;top:339px;color:#1d8a3a">IV201902/0009</div>
<div class="t" style="left:571px;top:339px;color:#1d8a3a">2/21/2019</div>
<div class="t" style="left:675px;top:339px;color:#1d8a3a"></div>
<div class="t" style="left:831px;top:339px;color:#1d8a3a">John Doe</div>
<div class="t" style="left:980px;top:339px;color:#1d8a3a">+00 123 456 987</div>
<div class="t" style="left:1020px;top:339px;width:200px;text-align:right;color:#1d8a3a">269.11 €</div>
<div class="t" style="left:1126px;top:339px;width:200px;text-align:right;color:#1d8a3a">269.11 €</div>
<div class="t" style="left:1224px;top:339px;width:200px;text-align:right;color:#1d8a3a">269.11 €</div>
<div class="t" style="left:1335px;top:339px;width:200px;text-align:right;color:#1d8a3a">0.00 €</div>
<svg style="left:1552px;top:339px" width="14" height="14" viewBox="0 0 14 14"><rect x="0.5" y="0.5" width="13" height="13" fill="#fff" stroke="#aaa"/><path d="M3 7l2.8 2.8 5-5" fill="none" stroke="#7a7a7a" stroke-width="1.25"/></svg>
<div class="ab" style="left:399px;top:177px;width:1px;height:180px;background:#d4d4d4"></div>
<div class="ab" style="left:567px;top:177px;width:1px;height:180px;background:#d4d4d4"></div>
<div class="ab" style="left:671px;top:177px;width:1px;height:180px;background:#d4d4d4"></div>
<div class="ab" style="left:827px;top:177px;width:1px;height:180px;background:#d4d4d4"></div>
<div class="ab" style="left:976px;top:177px;width:1px;height:180px;background:#d4d4d4"></div>
<div class="ab" style="left:1118px;top:177px;width:1px;height:180px;background:#d4d4d4"></div>
<div class="ab" style="left:1222px;top:177px;width:1px;height:180px;background:#d4d4d4"></div>
<div class="ab" style="left:1328px;top:177px;width:1px;height:180px;background:#d4d4d4"></div>
<div class="ab" style="left:1426px;top:177px;width:1px;height:180px;background:#d4d4d4"></div>
<div class="ab" style="left:1537px;top:177px;width:1px;height:180px;background:#d4d4d4"></div>
<div class="ab" style="left:1581px;top:177px;width:16px;height:625px;background:#f0f0f0"></div>
<div class="ab" style="left:1581px;top:178px;width:15px;height:16px;background:#fff;border:1px solid #e2e2e2"></div>
<svg style="left:1584px;top:183px" width="9" height="5" viewBox="0 0 9 5"><path d="M0 4.5h8l-4-4z" fill="#ccc"/></svg>
<div class="ab" style="left:1581px;top:784px;width:15px;height:16px;background:#fff;border:1px solid #e2e2e2"></div>
<svg style="left:1584px;top:790px" width="9" height="5" viewBox="0 0 9 5"><path d="M0 0.5h8l-4 4z" fill="#ccc"/></svg>
<div class="ab" style="left:204px;top:801px;width:1393px;height:1px;background:#d0d0d0"></div>
<div class="ab" style="left:204px;top:802px;width:1393px;height:36px;background:#fff"></div>
<div class="ab" style="left:1120px;top:808px;width:102px;height:24px;background:#efefef"></div>
<div class="t" style="left:1017px;top:813px;width:200px;text-align:right;color:#333">68,342.78 €</div>
<div class="ab" style="left:1224px;top:808px;width:104px;height:24px;background:#efefef"></div>
<div class="t" style="left:1123px;top:813px;width:200px;text-align:right;color:#333">68,342.78 €</div>
<div class="ab" style="left:1428px;top:808px;width:109px;height:24px;background:#efefef"></div>
<div class="t" style="left:1332px;top:813px;width:200px;text-align:right;color:#333">57,368.40 €</div>
<div class="ab" style="left:203px;top:838px;width:1395px;height:1px;background:#bdbdbd"></div>
<div class="ab" style="left:204px;top:839px;width:1393px;height:32px;background:#efefef"></div>
<svg style="left:211px;top:848px" width="14" height="14" viewBox="0 0 14 14"><rect x="0.5" y="0.5" width="13" height="13" fill="#fff" stroke="#aaa"/><path d="M3 7l2.8 2.8 5-5" fill="none" stroke="#7a7a7a" stroke-width="1.25"/></svg>
<div class="t" style="left:1387px;top:849px;width:200px;text-align:right;color:#333">Edit Filter</div>
<div class="ab" style="left:110px;top:871px;width:1490px;height:1px;background:#d8d8d8"></div>
<div class="ab" style="left:109px;top:871px;width:1px;height:26px;background:#d8d8d8"></div>
<div class="ab" style="left:2px;top:895px;width:108px;height:2px;background:#1565c0"></div>
<div class="t" style="left:13px;top:877px;color:#1565c0">Projects [9 / 317]</div>
<svg style="left:1585px;top:885px" width="8" height="4" viewBox="0 0 8 4"><path d="M0 0h7l-3.5 3.5z" fill="#666"/></svg>
<div class="ab" style="left:594px;top:341px;width:416px;height:215px;background:rgba(0,0,0,0.08);filter:blur(3px)"></div>
<div class="ab" style="left:592px;top:339px;width:416px;height:215px;background:#f7f7f7;border:1px solid #a8a8a8;box-shadow:2px 2px 6px rgba(0,0,0,0.22)"></div>
<div class="ab" style="left:593px;top:340px;width:414px;height:30px;background:#fff"></div>
<svg style="left:601px;top:346px" width="17" height="17" viewBox="0 0 17 17"><ellipse cx="8" cy="8" rx="7.6" ry="7.8" fill="none" stroke="#b0b0b0" stroke-width="1"/><path d="M6.8 15.5C6.5 10 7.5 5 9 0.5M7.8 15.5C9 11 9.6 5 9.6 0.5" fill="none" stroke="#b0b0b0" stroke-width="0.8"/></svg>
<div class="t" style="left:622px;top:348px;color:#858585;font-size:12px;letter-spacing:-0.092px;">Fibu Export Manager</div>
<svg style="left:986px;top:348px" width="12" height="12" viewBox="0 0 12 12"><path d="M0.5 0.5l11 11M11.5 0.5l-11 11" stroke="#555" stroke-width="1"/></svg>
<div class="t" style="left:608px;top:385px;color:#111;letter-spacing:-0.134px;">Finance acc. target</div>
<div class="ab" style="left:699px;top:382px;width:296px;height:20px;background:#e4e4e4;border:1px solid #adadad"></div>
<div class="t" style="left:703px;top:385px;color:#111;letter-spacing:-0.133px;">DATEV; standard proceeds account</div>
<svg style="left:981px;top:389px" width="10" height="6" viewBox="0 0 10 6"><path d="M0.5 0.5l4.5 4.5 4.5-4.5" fill="none" stroke="#333" stroke-width="1"/></svg>
<div class="t" style="left:608px;top:412px;color:#111;letter-spacing:-0.285px;">Export type</div>
<div class="ab" style="left:699px;top:409px;width:296px;height:20px;background:#e4e4e4;border:1px solid #adadad"></div>
<div class="t" style="left:703px;top:412px;color:#111;letter-spacing:-0.286px;">Complete export - everything in time period</div>
<svg style="left:981px;top:416px" width="10" height="6" viewBox="0 0 10 6"><path d="M0.5 0.5l4.5 4.5 4.5-4.5" fill="none" stroke="#333" stroke-width="1"/></svg>
<div class="t" style="left:608px;top:439px;color:#111;letter-spacing:-0.295px;">Debitors</div>
<div class="ab" style="left:699px;top:436px;width:296px;height:20px;background:#e4e4e4;border:1px solid #adadad"></div>
<div class="t" style="left:703px;top:439px;color:#111;"></div>
<svg style="left:981px;top:443px" width="10" height="6" viewBox="0 0 10 6"><path d="M0.5 0.5l4.5 4.5 4.5-4.5" fill="none" stroke="#333" stroke-width="1"/></svg>
<div class="t" style="left:608px;top:466px;color:#111;letter-spacing:-0.284px;">Time span from:</div>
<div class="ab" style="left:699px;top:463px;width:100px;height:20px;background:#fff;border:1px solid #adadad"></div>
<div class="t" style="left:703px;top:466px;color:#111">12/1/2019</div>
<svg style="left:787px;top:472px" width="8" height="4" viewBox="0 0 8 4"><path d="M0 0h7l-3.5 3.5z" fill="#808080"/></svg>
<div class="t" style="left:828px;top:466px;color:#111;letter-spacing:-0.248px;">Time span to:</div>
<div class="ab" style="left:895px;top:463px;width:100px;height:20px;background:#fff;border:1px solid #adadad"></div>
<div class="t" style="left:899px;top:466px;color:#111">12/31/2019</div>
<svg style="left:984px;top:472px" width="8" height="4" viewBox="0 0 8 4"><path d="M0 0h7l-3.5 3.5z" fill="#808080"/></svg>
<div class="t" style="left:608px;top:493px;color:#111;letter-spacing:-0.322px;">File depository</div>
<div class="ab" style="left:699px;top:490px;width:265px;height:20px;background:#fff;border:1px solid #adadad"></div>
<div class="t" style="left:703px;top:493px;color:#1a73d0"><u>C:\</u></div>
<div class="ab" style="left:971px;top:489px;width:23px;height:21px;background:#e3e3e3;border:2px solid #1a73d0"></div>
<svg style="left:974px;top:492px" width="18" height="16" viewBox="0 0 18 16"><path d="M1.5 13.5V1.5h6l1.5 1.5h5.5v10z" fill="#fff" stroke="#e6762a"/><path d="M0.5 6.5h15.5l-1.5 7h-13z" fill="#f5d68e" stroke="#e6762a"/></svg>
<div class="ab" style="left:790px;top:521px;width:98px;height:21px;background:#e1e1e1;border:1px solid #adadad"></div>
<div class="t" style="left:738.0px;top:525px;width:200px;text-align:center;color:#111;letter-spacing:-0.465px;">Export</div>
<div class="ab" style="left:896px;top:521px;width:98px;height:21px;background:#e1e1e1;border:1px solid #adadad"></div>
<div class="t" style="left:844.0px;top:525px;width:200px;text-align:center;color:#111;letter-spacing:-0.378px;">Abort</div>
</body></html>
